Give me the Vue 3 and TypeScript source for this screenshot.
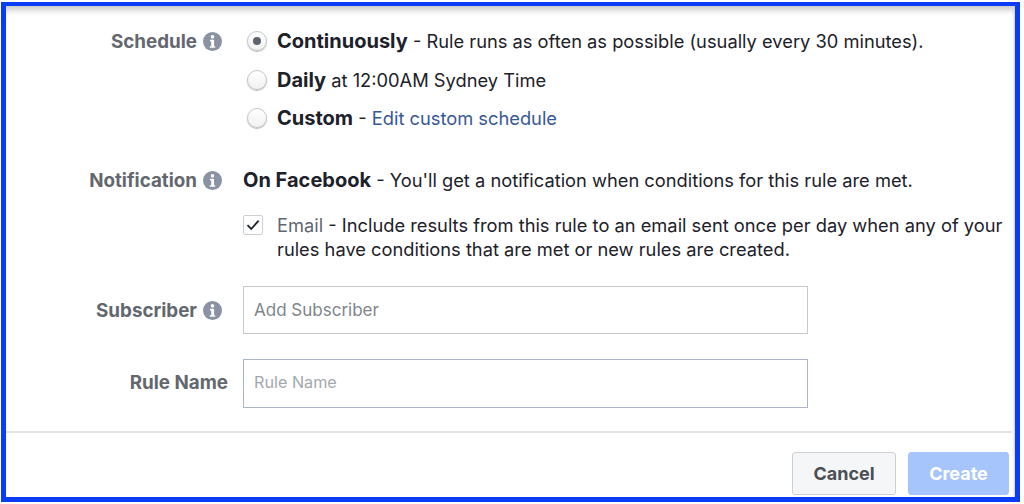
<template>
  <div class="frame">
    <div class="form">
      <div class="row schedule">
        <div class="label">Schedule <InfoIcon /></div>
        <div class="options">
          <div class="option">
            <span class="radio checked"></span>
            <span><b class="big">Continuously</b> - Rule runs as often as possible (usually every 30 minutes).</span>
          </div>
          <div class="option">
            <span class="radio"></span>
            <span><b class="big">Daily</b> at 12:00AM Sydney Time</span>
          </div>
          <div class="option">
            <span class="radio"></span>
            <span><b class="big">Custom</b> - <a class="link">Edit custom schedule</a></span>
          </div>
        </div>
      </div>

      <div class="row notification">
        <div class="label">Notification <InfoIcon /></div>
        <div class="notify">
          <div class="fb"><b class="big">On Facebook</b> - You'll get a notification when conditions for this rule are met.</div>
          <div class="email">
            <span class="check">
              <svg width="14" height="12" viewBox="0 0 14 12"><path d="M1.5 6.2 5.2 10 12.6 1.6" fill="none" stroke="#1d2129" stroke-width="1.8" /></svg>
            </span>
            <span class="email-text"><span class="muted">Email</span> - Include results from this rule to an email sent once per day when any of your rules have conditions that are met or new rules are created.</span>
          </div>
        </div>
      </div>

      <div class="row subscriber">
        <div class="label">Subscriber <InfoIcon /></div>
        <input class="field" type="text" placeholder="Add Subscriber" />
      </div>

      <div class="row rule">
        <div class="label rule-label">Rule Name</div>
        <input class="field small" type="text" placeholder="Rule Name" />
      </div>
    </div>

    <div class="footer">
      <button class="btn cancel">Cancel</button>
      <button class="btn create">Create</button>
    </div>
  </div>
</template>

<script setup lang="ts">
import { h } from 'vue';

// same little "i" badge next to each label
const InfoIcon = () =>
  h('svg', { class: 'info', width: 19, height: 19, viewBox: '0 0 18 18' }, [
    h('circle', { cx: 9, cy: 9, r: 9, fill: '#8a92a3' }),
    h('circle', { cx: 9, cy: 4.6, r: 1.7, fill: '#fff' }),
    h('path', { d: 'M6.6 7.4h3.9v6h1.1v1.5H6.4v-1.5h1.4V8.9H6.6z', fill: '#fff' }),
  ]);
</script>

<style>
body {
  margin: 0;
  background: #fff;
}
</style>

<style scoped>
.frame {
  width: 1019px;
  height: 500px;
  margin: 2px 0 0 1px;
  box-sizing: border-box;
  border: 5px solid #0a3bf5;
  border-top-width: 4px;
  background: #fff;
  box-shadow: inset 0 7px 6px -3px #c9c9c9, inset -2px 0 2px -1px #d0d0d0;
  font-family: Inter, 'Liberation Sans', sans-serif;
  font-size: 18.3px;
  color: #1d2129;
  overflow: hidden;
}

.form {
  height: 427px;
  box-sizing: border-box;
  border-bottom: 2px solid #e3e4e6;
  margin-right: 3px;
  padding-top: 20px;
}

.row {
  display: grid;
  grid-template-columns: 216px 1fr;
  column-gap: 21px;
}

.label {
  display: flex;
  justify-content: flex-end;
  align-items: center;
  gap: 6px;
  align-self: start;
  height: 30px;
  font-weight: 700;
  font-size: 18.8px;
  color: #63676e;
}

.rule-label {
  margin-right: -6px;
}

.info {
  flex: none;
}

.big {
  font-size: 20px;
}

.options {
  display: flex;
  flex-direction: column;
  gap: 8px;
  padding-left: 4px;
}

.option {
  display: flex;
  align-items: center;
  gap: 10px;
  height: 30px;
  white-space: nowrap;
}

.option:first-child {
  margin-bottom: 1px;
}

.radio {
  flex: none;
  width: 20px;
  height: 20px;
  box-sizing: border-box;
  border-radius: 50%;
  border: 1px solid #c4c6ca;
  background: linear-gradient(#fff, #f1f1f1);
  box-shadow: 0 1px 1px #bbb;
  position: relative;
}

.radio.checked::after {
  content: '';
  position: absolute;
  left: 5px;
  top: 5px;
  width: 8px;
  height: 8px;
  border-radius: 50%;
  background: #5d6470;
}

.link {
  color: #365899;
}

.notification {
  margin-top: 32px;
}

.fb {
  height: 30px;
  line-height: 30px;
  white-space: nowrap;
}

.email {
  display: flex;
  gap: 14px;
  margin-top: 20px;
}

.check {
  flex: none;
  width: 20px;
  height: 20px;
  box-sizing: border-box;
  border: 1px solid #ccd0d5;
  border-radius: 2px;
  display: flex;
  align-items: center;
  justify-content: center;
}

.email-text {
  line-height: 24px;
  margin-top: -2px;
  width: 730px;
}

.muted {
  color: #606770;
}

.subscriber {
  margin-top: 25px;
}

.subscriber .label {
  height: 48px;
}

.field {
  width: 565px;
  height: 48px;
  box-sizing: border-box;
  border: 1px solid #c6cacf;
  padding: 0 10px;
  font-family: inherit;
  font-size: 17px;
  outline: none;
}

.field::placeholder {
  color: #80858c;
}

.field.small {
  font-size: 16.2px;
  height: 49px;
  padding-bottom: 3px;
  border-color: #a9b4c6;
}

.field.small::placeholder {
  color: #a4a8ae;
}

.rule {
  margin-top: 25px;
}

.rule .label {
  height: 46px;
}

.footer {
  display: flex;
  justify-content: flex-end;
  gap: 12px;
  padding: 19px 6px 0 0;
}

.btn {
  width: 104px;
  height: 43px;
  box-sizing: border-box;
  border-radius: 3px;
  font-family: inherit;
  font-weight: 700;
  font-size: 18px;
}

.cancel {
  background: #f5f6f7;
  border: 1px solid #ced0d4;
  color: #4b4f56;
}

.create {
  width: 101px;
  background: #a7c5fd;
  border: 1px solid #a7c5fd;
  color: #fff;
}
</style>
